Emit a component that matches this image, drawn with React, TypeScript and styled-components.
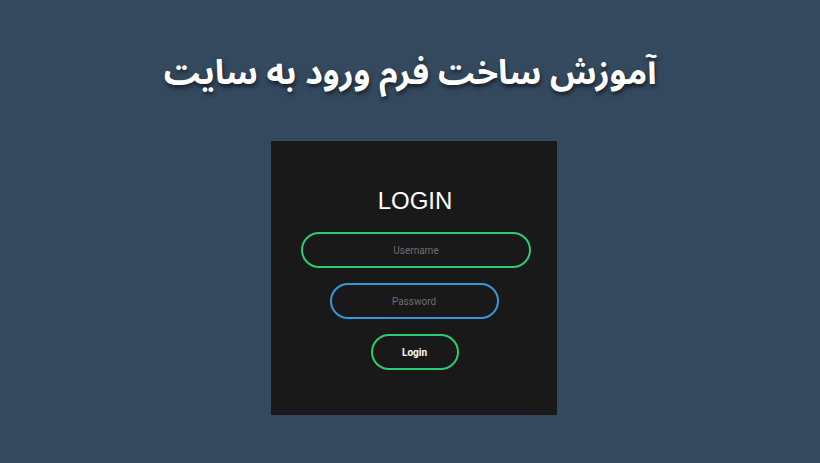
import React from "react";
import styled, { createGlobalStyle } from "styled-components";

const Global = createGlobalStyle`
  html, body { margin: 0; padding: 0; }
  body { background: #34495e; width: 820px; height: 463px; overflow: hidden; }
`;

const Page = styled.div`
  display: flex;
  flex-direction: column;
  align-items: center;
  width: 820px;
  height: 463px;
`;

const Title = styled.h1`
  margin: 46px 0 0 0;
  height: 95px;
  font-family: "Noto Sans Arabic", "DejaVu Sans", sans-serif;
  font-weight: bold;
  font-size: 34px;
  line-height: 54px;
  color: #ffffff;
  direction: rtl;
  text-shadow: 1px 3px 4px rgba(0, 0, 0, 0.55);
`;

const Card = styled.form`
  width: 286px;
  height: 274px;
  margin-left: 8px;
  box-sizing: border-box;
  background: #191919;
  display: flex;
  flex-direction: column;
  align-items: center;
  padding-top: 44px;
`;

const Heading = styled.div`
  font-family: "Liberation Sans", Arial, sans-serif;
  font-size: 24px;
  line-height: 32px;
  color: #ffffff;
  margin-bottom: 15px;
  margin-left: 2px;
`;

const Field = styled.div<{ $w: number; $c: string; $dx?: number }>`
  width: ${(p) => p.$w}px;
  height: 36px;
  box-sizing: border-box;
  border: 2px solid ${(p) => p.$c};
  border-radius: 20px;
  display: flex;
  align-items: center;
  justify-content: center;
  font-family: "Roboto", "Liberation Sans", sans-serif;
  font-size: 10px;
  color: #6e6e6e;
  margin-bottom: 15px;
  margin-left: ${(p) => p.$dx ?? 0}px;
`;

const Button = styled.div`
  width: 88px;
  height: 36px;
  box-sizing: border-box;
  border: 2px solid #2ecc71;
  border-radius: 20px;
  display: flex;
  align-items: center;
  justify-content: center;
  font-family: "Roboto", "Liberation Sans", sans-serif;
  font-weight: bold;
  font-size: 10px;
  color: #ffffff;
  margin-left: 1px;
`;

export default function App() {
  return (
    <>
      <Global />
      <Page>
        <Title>آموزش ساخت فرم ورود به سایت</Title>
        <Card>
          <Heading>LOGIN</Heading>
          <Field $w={230} $c="#2ecc71" $dx={4}>Username</Field>
          <Field $w={169} $c="#3498db">Password</Field>
          <Button>Login</Button>
        </Card>
      </Page>
    </>
  );
}
